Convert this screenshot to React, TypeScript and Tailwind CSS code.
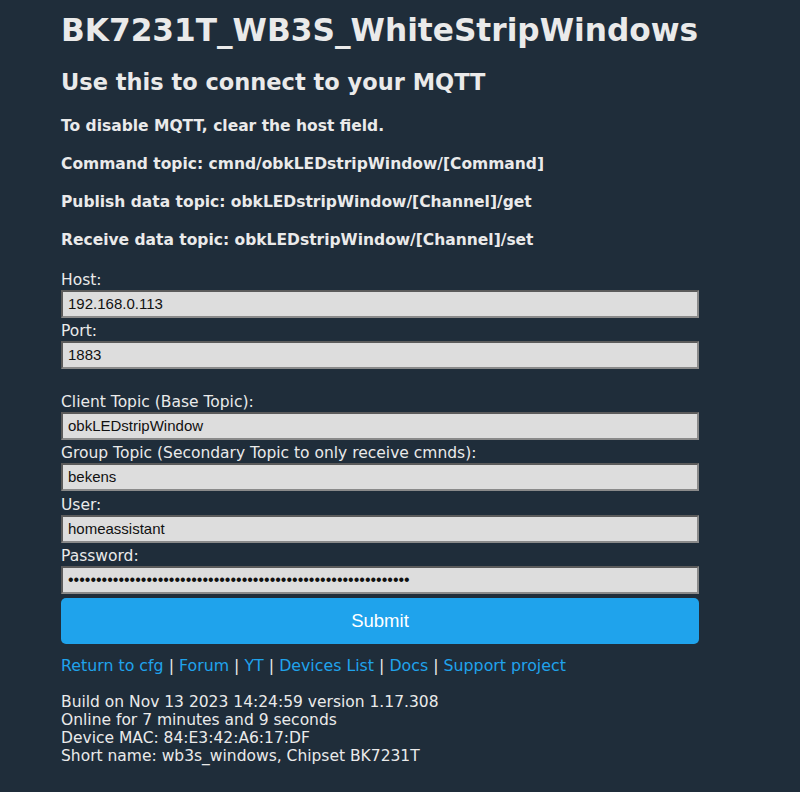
import React from "react";

const fields = [
  { label: "Host:", value: "192.168.0.113" },
  { label: "Port:", value: "1883", gapAfter: true },
  { label: "Client Topic (Base Topic):", value: "obkLEDstripWindow" },
  { label: "Group Topic (Secondary Topic to only receive cmnds):", value: "bekens" },
  { label: "User:", value: "homeassistant" },
  { label: "Password:", value: "•".repeat(61), password: true },
];

const links = ["Return to cfg", "Forum", "YT", "Devices List", "Docs", "Support project"];

const info = [
  "Build on Nov 13 2023 14:24:59 version 1.17.308",
  "Online for 7 minutes and 9 seconds",
  "Device MAC: 84:E3:42:A6:17:DF",
  "Short name: wb3s_windows, Chipset BK7231T",
];

export default function App() {
  return (
    <div
      className="min-h-[792px] w-full bg-[#1f2d3a] text-[#eaeaea]"
      style={{ fontFamily: '"DejaVu Sans", Verdana, sans-serif' }}
    >
      <div className="ml-[61px] w-[638px] pb-8">
        {/* Headings */}
        <h1 className="pt-[10px] text-[31.2px] font-bold leading-[40px] whitespace-nowrap">
          BK7231T_WB3S_WhiteStripWindows
        </h1>
        <h3 className="mt-[17px] text-[22.5px] font-bold leading-[30px]">
          Use this to connect to your MQTT
        </h3>

        <div className="mt-[20px] flex flex-col gap-[19px] text-[15.5px] font-bold leading-[19px]">
          <p>To disable MQTT, clear the host field.</p>
          <p>Command topic: cmnd/obkLEDstripWindow/[Command]</p>
          <p>Publish data topic: obkLEDstripWindow/[Channel]/get</p>
          <p>Receive data topic: obkLEDstripWindow/[Channel]/set</p>
        </div>

        {/* Form */}
        <form className="mt-[20px] flex flex-col" onSubmit={(e) => e.preventDefault()}>
          {fields.map((f) => (
            <div key={f.label} className={f.gapAfter ? "mb-[19px]" : ""}>
              <label className="block text-[15.5px] leading-[20px]">{f.label}</label>
              <div
                className="mb-[3.4px] h-[28px] w-full border-2 border-t-[#5b5b5b] border-l-[#5b5b5b] border-b-[#8a8a8a] border-r-[#8a8a8a] bg-[#dddddd] px-[5px] text-[15px] leading-[24px] text-[#111]"
                style={{ fontFamily: '"Liberation Sans", Arial, sans-serif' }}
              >
                {f.password ? <span className="text-[16px]">{f.value}</span> : f.value}
              </div>
            </div>
          ))}
          <button
            type="submit"
            className="mt-[1px] h-[46px] w-full rounded-[5px] bg-[#1fa3ec] text-[18.5px] text-white"
            style={{ fontFamily: '"Liberation Sans", Arial, sans-serif' }}
          >
            Submit
          </button>
        </form>

        {/* Links */}
        <div className="mt-[12px] text-[15.8px] leading-[20px]">
          {links.map((l, i) => (
            <span key={l}>
              {i > 0 && <span className="text-[#eaeaea]"> | </span>}
              <a href="#" className="text-[#1fa3ec]">
                {l}
              </a>
            </span>
          ))}
        </div>

        {/* Info */}
        <div className="mt-[17px] text-[15.5px] leading-[18px]">
          {info.map((line) => (
            <div key={line}>{line}</div>
          ))}
        </div>
      </div>
    </div>
  );
}
